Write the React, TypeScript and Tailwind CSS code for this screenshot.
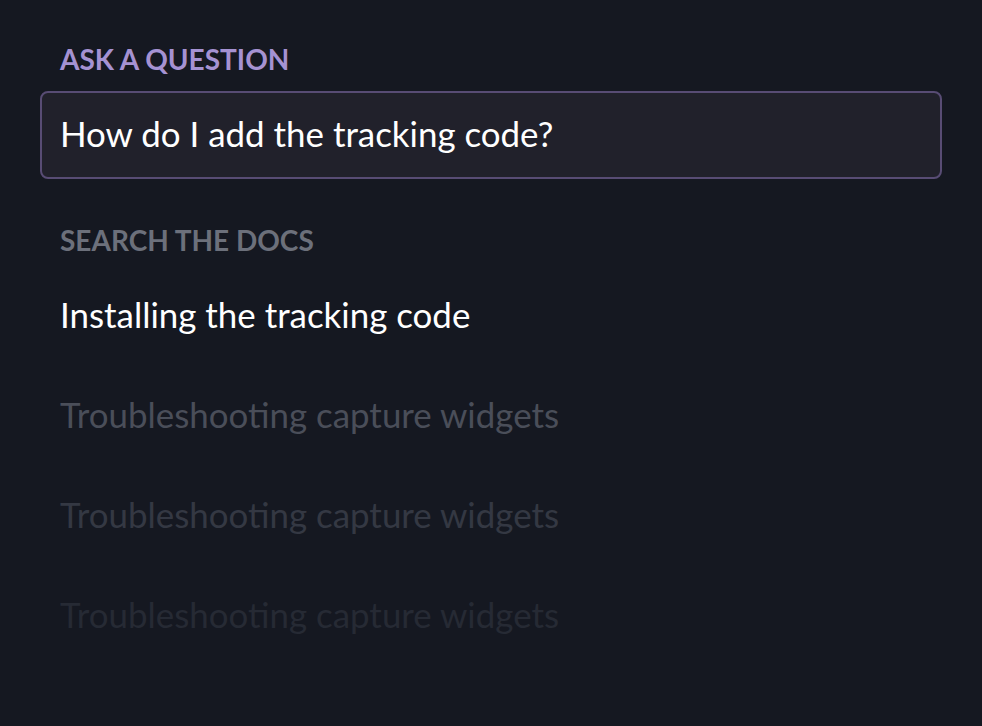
import React from "react";

export default function App() {
  const font = { fontFamily: "Lato, 'Open Sans', sans-serif" };
  return (
    <div className="w-[982px] h-[726px] bg-[#151821] overflow-hidden" style={font}>
      <div className="flex flex-col px-10 pt-[41px]">
        <div className="pl-5 text-[28px] leading-[36px] font-bold text-[#a592d2]">
          ASK A QUESTION
        </div>
        <div className="mt-[14px] h-[88px] w-[902px] rounded-[8px] border-2 border-[#584c74] bg-[#21212b] flex items-center px-[18px] pb-[1px]">
          <span className="text-[34.9px] text-white leading-none">How do I add the tracking code?</span>
        </div>
        <div className="pl-5 mt-[43px] text-[28px] leading-[36px] font-bold text-[#6c707b]">
          SEARCH THE DOCS
        </div>
        <div className="pl-5 flex flex-col mt-[37px]">
          <div className="h-[100px] text-[34.9px] leading-[40px] text-white">Installing the tracking code</div>
          <div className="h-[100px] text-[34.9px] leading-[40px] text-[#4a4e59]">Troubleshooting capture widgets</div>
          <div className="h-[100px] text-[34.9px] leading-[40px] text-[#343843]">Troubleshooting capture widgets</div>
          <div className="h-[100px] text-[34.9px] leading-[40px] text-[#262a34]">Troubleshooting capture widgets</div>
        </div>
      </div>
    </div>
  );
}
